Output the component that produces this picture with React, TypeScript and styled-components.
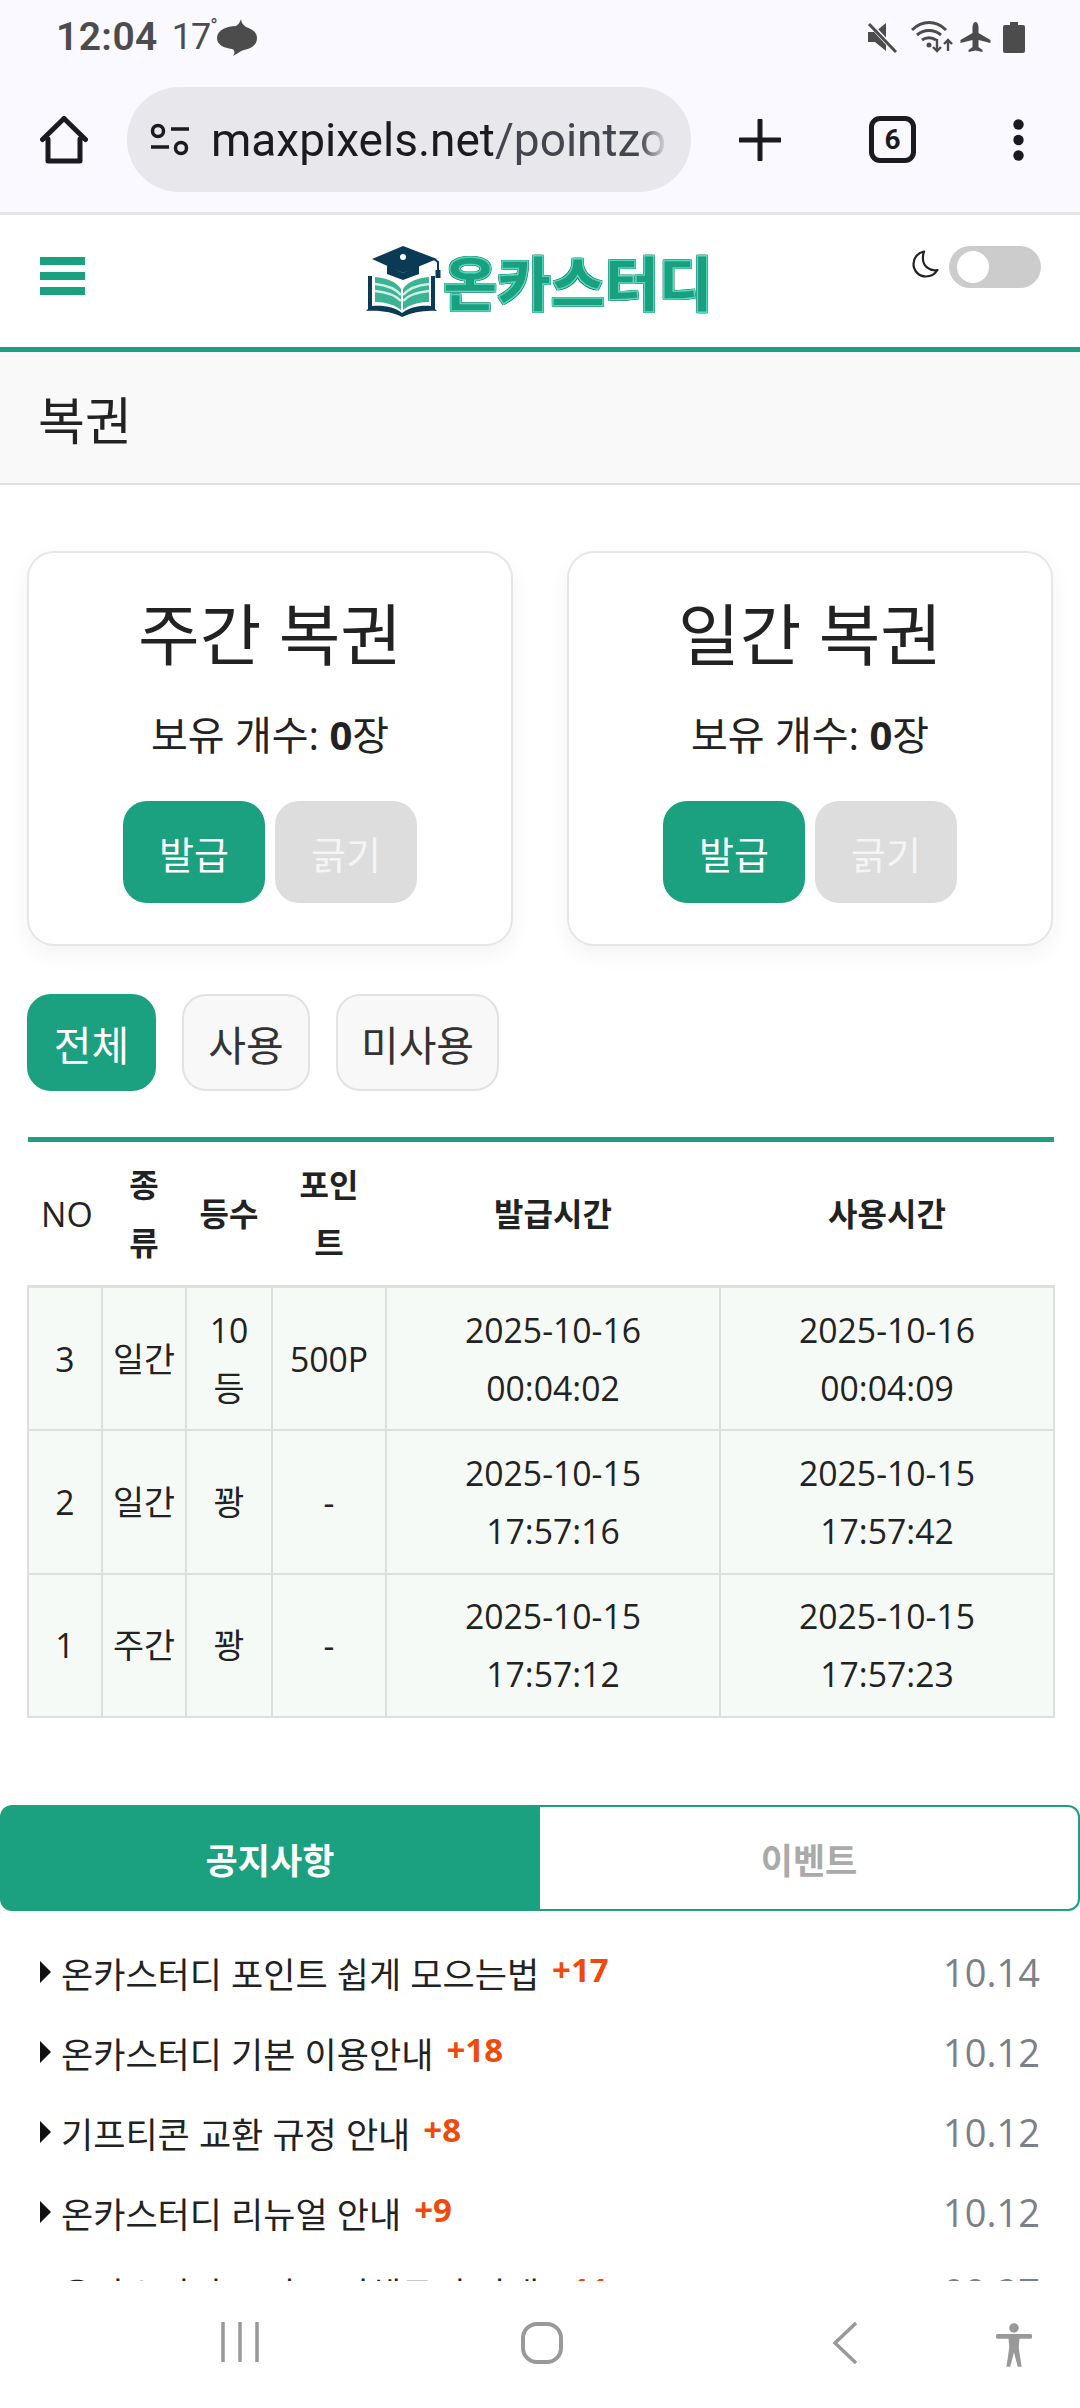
import React from "react";
import styled, { createGlobalStyle } from "styled-components";

const Global = createGlobalStyle`
  html, body { margin: 0; padding: 0; background: #fff; }
  body { width: 1080px; height: 2408px; overflow: hidden; font-family: "Open Sans", "Noto Sans CJK KR", sans-serif; color: #222; }
  * { box-sizing: border-box; }
`;

const Screen = styled.div`
  width: 1080px;
  height: 2408px;
  display: flex;
  flex-direction: column;
  overflow: hidden;
`;
const Chrome = styled.div`
  flex: none;
  height: 215px;
  background: #f9f9ff;
  border-bottom: 3px solid #e4e4e8;
  display: flex;
  flex-direction: column;
`;
const StatusBar = styled.div`
  height: 74px;
  padding: 0 55px 0 56px;
  display: flex;
  align-items: center;
  justify-content: space-between;
  color: #4c4c4c;
  font-family: Roboto, sans-serif;
`;
const StatusLeft = styled.div`
  display: flex;
  align-items: center;
`;
const Time = styled.span`
  font-size: 39px;
  font-weight: 600;
  letter-spacing: 0.4px;
`;
const Temp = styled.span`
  font-size: 36px;
  margin-left: 14px;
  letter-spacing: -1px;
`;
const Deg = styled.sup`
  font-size: 20px;
  line-height: 0;
  position: relative;
  top: -3px;
`;
const WeatherIcon = styled.svg`
  margin-left: 0;
`;
const StatusRight = styled.div`
  display: flex;
  align-items: center;
  gap: 7px;
`;
const WifiIcon = styled.svg`
  margin-left: 7px;
`;
const BatteryIcon = styled.svg`
  margin-left: 5px;
`;
const BrowserBar = styled.div`
  height: 118px;
  display: flex;
  align-items: flex-start;
  padding: 13px 0 0 40px;
`;
const Omnibox = styled.div`
  width: 564px;
  height: 105px;
  margin-left: 39px;
  border-radius: 52px;
  background: #e8e7ec;
  display: flex;
  align-items: center;
  padding-left: 23px;
  overflow: hidden;
`;
const Url = styled.div`
  margin-left: 21px;
  width: 457px;
  font-family: Roboto, sans-serif;
  font-size: 46px;
  white-space: nowrap;
  overflow: hidden;
  color: #1b1b1f;
  mask-image: linear-gradient(to right, #000 94%, transparent);
`;
const UrlPath = styled.span`
  color: #44464f;
`;
const IconSlot = styled.div<{ $ml: number }>`
  margin-left: ${(p) => p.$ml}px;
  height: 105px;
  display: flex;
  align-items: center;
`;
const TabCount = styled.div`
  width: 47px;
  height: 47px;
  border: 5px solid #1b1b1f;
  border-radius: 11px;
  display: flex;
  align-items: center;
  justify-content: center;
  font-family: Roboto, sans-serif;
  font-size: 28px;
  font-weight: 700;
  color: #1b1b1f;
`;
const SiteHeader = styled.header`
  flex: none;
  height: 137px;
  border-bottom: 5px solid #1ba17f;
  position: relative;
  display: flex;
  align-items: flex-start;
  padding-top: 42px;
  padding-left: 40px;
`;
const Burger = styled.div`
  width: 45px;
  display: flex;
  flex-direction: column;
  gap: 7px;
`;
const BurgerBar = styled.div`
  height: 8px;
  background: #1ba17f;
`;
const Logo = styled.div`
  margin-left: 281px;
  margin-top: -11px;
  display: flex;
  align-items: flex-start;
`;
const LogoText = styled.span`
  margin-left: -1px;
  margin-top: -1px;
  font-family: "Noto Sans CJK KR", sans-serif;
  font-size: 59px;
  font-weight: 900;
  line-height: 72px;
  letter-spacing: -0.4px;
  white-space: nowrap;
  color: #1ba07f;
  -webkit-text-stroke: 1.5px #4fdcc0;
  text-shadow: 1px 1px 0 #0e6a55, -1px -1px 0 #0e6a55, 1px -1px 0 #0e6a55, -1px 1px 0 #0e6a55;
`;
const ThemeBox = styled.div`
  position: absolute;
  top: 31px;
  left: 912px;
  display: flex;
  align-items: flex-start;
  gap: 10px;
`;
const MoonIcon = styled.svg`
  margin-top: 4px;
`;
const Toggle = styled.div`
  width: 92px;
  height: 42px;
  border-radius: 21px;
  background: #cccccc;
  padding: 5px 0 0 8px;
`;
const Knob = styled.div`
  width: 32px;
  height: 32px;
  border-radius: 50%;
  background: #fff;
`;
const PageTitle = styled.div`
  flex: none;
  height: 133px;
  background: #f9f9f9;
  border-bottom: 2px solid #dfdfe5;
  display: flex;
  align-items: center;
  padding-left: 38px;
  font-size: 51px;
  color: #222;
`;
const Content = styled.main`
  flex: 1;
  min-height: 0;
  overflow: hidden;
  padding: 66px 27px 0;
`;
const Cards = styled.div`
  display: flex;
  justify-content: space-between;
`;
const Card = styled.section`
  width: 486px;
  height: 395px;
  border: 2px solid #e6e6e6;
  border-radius: 27px;
  background: #fff;
  box-shadow: 0 8px 22px rgba(0, 0, 0, 0.05);
  display: flex;
  flex-direction: column;
  align-items: center;
`;
const CardTitle = styled.h2`
  margin: 37px 0 0;
  font-size: 67px;
  font-weight: 400;
  line-height: 88px;
  color: #222;
`;
const Owned = styled.p`
  margin: 29px 0 0;
  font-size: 40px;
  line-height: 56px;
  color: #222;
`;
const OwnedNum = styled.b`
  font-weight: 700;
`;
const CardButtons = styled.div`
  margin-top: 38px;
  display: flex;
  gap: 10px;
`;
const CardButton = styled.div<{ $on?: boolean }>`
  width: 142px;
  height: 102px;
  border-radius: 24px;
  background: ${(p) => (p.$on ? "#1ba17f" : "#dddddd")};
  color: ${(p) => (p.$on ? "#fff" : "#f5f5f5")};
  font-size: 38px;
  display: flex;
  align-items: center;
  justify-content: center;
`;
const Filters = styled.div`
  margin-top: 48px;
  display: flex;
  gap: 26px;
`;
const Filter = styled.div<{ $on?: boolean; $w: number }>`
  width: ${(p) => p.$w}px;
  height: 97px;
  border-radius: 24px;
  border: 2px solid ${(p) => (p.$on ? "#1ba17f" : "#e2e2e2")};
  background: ${(p) => (p.$on ? "#1ba17f" : "#f8f8f8")};
  color: ${(p) => (p.$on ? "#fff" : "#333")};
  font-size: 41px;
  display: flex;
  align-items: center;
  justify-content: center;
`;
const Ledger = styled.table`
  margin-top: 46px;
  width: 1026px;
  table-layout: fixed;
  border-collapse: collapse;
  border-top: 5px solid #1f9e80;
  font-size: 33.75px;
  line-height: 58px;
  text-align: center;
`;
const HeadCell = styled.th<{ $plain?: boolean }>`
  height: 147px;
  padding: 0 13px;
  font-size: ${(p) => (p.$plain ? 33.75 : 32)}px;
  font-weight: ${(p) => (p.$plain ? 400 : 700)};
  color: #222;
  border-bottom: 3px solid #dfdfdf;
`;
const Cell = styled.td`
  height: 143.5px;
  padding: 0 9px;
  background: #f6faf7;
  border: 2px solid #dedede;
  color: #222;
`;
const DateCell = styled(Cell)`
  padding: 0 70px;
`;
const Tabs = styled.div`
  margin: 87px -27px 0;
  height: 106px;
  display: flex;
`;
const TabOn = styled.div`
  width: 540px;
  background: #1ba17f;
  border-radius: 12px 0 0 12px;
  color: #fff;
  font-size: 35px;
  font-weight: 700;
  display: flex;
  align-items: center;
  justify-content: center;
`;
const TabOff = styled.div`
  width: 540px;
  background: #fff;
  border: 2px solid #1f9e80;
  border-left: 0;
  border-radius: 0 12px 12px 0;
  color: #aaaaaa;
  font-size: 35px;
  font-weight: 700;
  display: flex;
  align-items: center;
  justify-content: center;
`;
const List = styled.ul`
  list-style: none;
  margin: 21px -27px 0;
  padding: 0 40px;
`;
const Row = styled.li`
  height: 80px;
  display: flex;
  align-items: center;
`;
const Arrow = styled.i`
  flex: none;
  width: 0;
  height: 0;
  border-left: 11px solid #111;
  border-top: 11px solid transparent;
  border-bottom: 11px solid transparent;
  margin-right: 10px;
`;
const RowTitle = styled.span`
  font-size: 35px;
  color: #222;
  white-space: nowrap;
`;
const Count = styled.b`
  margin-left: 13px;
  font-size: 33px;
  font-weight: 700;
  color: #f04a0a;
  position: relative;
  top: -3px;
`;
const RowDate = styled.span`
  margin-left: auto;
  font-size: 38px;
  color: #7b8088;
`;
const NavBar = styled.nav`
  flex: none;
  height: 127px;
  background: #fff;
  display: flex;
  align-items: flex-start;
  padding-top: 41px;
`;
const NavSlot = styled.div<{ $ml: number }>`
  margin-left: ${(p) => p.$ml}px;
  display: flex;
`;

const rows = [
  ["3", "일간", "10등", "500P", "2025-10-16 00:04:02", "2025-10-16 00:04:09"],
  ["2", "일간", "꽝", "-", "2025-10-15 17:57:16", "2025-10-15 17:57:42"],
  ["1", "주간", "꽝", "-", "2025-10-15 17:57:12", "2025-10-15 17:57:23"],
];
const notices = [
  ["온카스터디 포인트 쉽게 모으는법", "+17", "10.14"],
  ["온카스터디 기본 이용안내", "+18", "10.12"],
  ["기프티콘 교환 규정 안내", "+8", "10.12"],
  ["온카스터디 리뉴얼 안내", "+9", "10.12"],
  ["온카스터디 포인트 전체규정 안내", "+11", "09.27"],
];

const CardBlock = ({ title }: { title: string }) => (
  <Card>
    <CardTitle>{title}</CardTitle>
    <Owned>
      보유 개수: <OwnedNum>0</OwnedNum>장
    </Owned>
    <CardButtons>
      <CardButton $on>발급</CardButton>
      <CardButton>긁기</CardButton>
    </CardButtons>
  </Card>
);

const LogoMark = () => (
  <svg width="78" height="72" viewBox="0 0 78 72">
    <path d="M2 30h4v30c12-1 23 1 30 7 8-6 18-8 29-7V30h4v33l2 2c-12-1-24 1-35 6-9-5-22-7-36-6l2-2z" fill="#0b3a55" />
    <path d="M9 31c11 1 21 4 26 12v21c-6-5-15-8-26-8z" fill="#3bb394" />
    <path d="M63 31c-11 1-21 4-26 12v21c6-5 15-8 26-8z" fill="#3bb394" />
    <path d="M9 38c10 1 20 4 26 11M9 45c10 1 20 3 26 10M63 38c-10 1-20 4-26 11M63 45c-10 1-20 3-26 10" stroke="#d5efe6" strokeWidth="2.500" fill="none" />
    <path d="M37 0 71 13 37 27 6 13z" fill="#0b3a55" />
    <path d="M21 19v9l16 6 16-6v-9l-16 8z" fill="#0b3a55" />
    <path d="M68 13l4 3v11" stroke="#0b3a55" strokeWidth="2" fill="none" />
    <rect x="69.500" y="24" width="5" height="8" fill="#0b3a55" />
    <circle cx="37" cy="11" r="3" fill="#fff" />
  </svg>
);

export default function App() {
  return (
    <Screen>
      <Global />
      <Chrome>
        <StatusBar>
          <StatusLeft>
            <Time>12:04</Time>
            <Temp>
              17<Deg>°</Deg>
            </Temp>
            <WeatherIcon width="40" height="37" viewBox="0 0 40 37">
              <path d="M24 0C23 3 22 5 19 7C10 7 0 11 0 19C0 26 7 29 15 30C18 31 18 34 16 37C20 35 23 32 27 31C34 30 40 26 40 19C40 13 35 10 29 8C26 6 24 3 24 0Z" fill="#4c4c4c" />
            </WeatherIcon>
          </StatusLeft>
          <StatusRight>
            <svg width="30" height="31" viewBox="0 0 30 31">
              <path d="M1 10h7l11-9v28l-11-9H1z" fill="#4c4c4c" />
              <path d="M3 2l26 28" stroke="#f9f9ff" strokeWidth="5" />
              <path d="M2 2l27 28" stroke="#4c4c4c" strokeWidth="3" />
            </svg>
            <WifiIcon width="42" height="32" viewBox="0 0 42 32">
              <path d="M1 9c10-10 24-10 34 0M6 14c7-6 17-6 24 0M11 19c4-3 10-3 14 0" stroke="#4c4c4c" strokeWidth="3" fill="none" />
              <circle cx="18" cy="24" r="2.500" fill="#4c4c4c" />
              <path d="M26 18v12M22 26l4 4 4-4M37 30V19M33 23l4-4 4 4" stroke="#4c4c4c" strokeWidth="2.400" fill="none" />
            </WifiIcon>
            <svg width="31" height="31" viewBox="0 0 31 31">
              <path d="M15.500 0c2 0 3 3 3 6v5l12 7v3l-12-3v7l4 3v2l-7-1.500-7 1.500v-2l4-3v-7L.5 21v-3l12-7V6c0-3 1-6 3-6z" fill="#4c4c4c" />
            </svg>
            <BatteryIcon width="22" height="31" viewBox="0 0 22 31">
              <path d="M7 0h8v3h5a2 2 0 0 1 2 2v24a2 2 0 0 1-2 2H2a2 2 0 0 1-2-2V5a2 2 0 0 1 2-2h5z" fill="#4c4c4c" />
            </BatteryIcon>
          </StatusRight>
        </StatusBar>
        <BrowserBar>
          <IconSlot $ml={0}>
            <svg width="48" height="48" viewBox="0 0 48 48">
              <path d="M2.500 23.500 24 2.500l21.500 21M8 23v22h32V23" fill="none" stroke="#1b1b1f" strokeWidth="5" strokeLinejoin="round" strokeLinecap="round" />
            </svg>
          </IconSlot>
          <Omnibox>
            <svg width="40" height="34" viewBox="0 0 40 34">
              <circle cx="8" cy="8" r="5.500" fill="none" stroke="#1b1b1f" strokeWidth="3.500" />
              <circle cx="31" cy="25" r="5.500" fill="none" stroke="#1b1b1f" strokeWidth="3.500" />
              <path d="M21 6h18M1 24h18" stroke="#1b1b1f" strokeWidth="3.500" />
            </svg>
            <Url>
              maxpixels.net<UrlPath>/pointzone</UrlPath>
            </Url>
          </Omnibox>
          <IconSlot $ml={48}>
            <svg width="42" height="42" viewBox="0 0 42 42">
              <path d="M21 1.500v39M1.500 21h39" stroke="#1b1b1f" strokeWidth="5" strokeLinecap="round" />
            </svg>
          </IconSlot>
          <IconSlot $ml={88}>
            <TabCount>6</TabCount>
          </IconSlot>
          <IconSlot $ml={97}>
            <svg width="11" height="42" viewBox="0 0 11 42">
              <circle cx="5.500" cy="5.500" r="5.200" fill="#1b1b1f" />
              <circle cx="5.500" cy="21" r="5.200" fill="#1b1b1f" />
              <circle cx="5.500" cy="36.500" r="5.200" fill="#1b1b1f" />
            </svg>
          </IconSlot>
        </BrowserBar>
      </Chrome>
      <SiteHeader>
        <Burger>
          <BurgerBar />
          <BurgerBar />
          <BurgerBar />
        </Burger>
        <Logo>
          <LogoMark />
          <LogoText>온카스터디</LogoText>
        </Logo>
        <ThemeBox>
          <MoonIcon width="27" height="28" viewBox="0 0 27 28">
            <path d="M12 1.500C5.500 3 1.500 8 1.500 14c0 7 5.500 12.500 12.500 12.500 5 0 9-2.500 11.500-6.500-7.500 1.500-14-3.500-14.500-10.500C10.800 6.500 11 4 12 1.500z" fill="none" stroke="#222" strokeWidth="2.200" strokeLinejoin="round" />
          </MoonIcon>
          <Toggle>
            <Knob />
          </Toggle>
        </ThemeBox>
      </SiteHeader>
      <PageTitle>복권</PageTitle>
      <Content>
        <Cards>
          <CardBlock title="주간 복권" />
          <CardBlock title="일간 복권" />
        </Cards>
        <Filters>
          <Filter $on $w={129}>전체</Filter>
          <Filter $w={128}>사용</Filter>
          <Filter $w={163}>미사용</Filter>
        </Filters>
        <Ledger>
          <colgroup>
            <col style={{ width: 74 }} />
            <col style={{ width: 84 }} />
            <col style={{ width: 86 }} />
            <col style={{ width: 114 }} />
            <col style={{ width: 334 }} />
            <col style={{ width: 334 }} />
          </colgroup>
          <thead>
            <tr>
              <HeadCell $plain>NO</HeadCell>
              <HeadCell>종류</HeadCell>
              <HeadCell>등수</HeadCell>
              <HeadCell>포인트</HeadCell>
              <HeadCell>발급시간</HeadCell>
              <HeadCell>사용시간</HeadCell>
            </tr>
          </thead>
          <tbody>
            {rows.map((r) => (
              <tr key={r[0]}>
                {r.slice(0, 4).map((c, i) => (
                  <Cell key={i}>{c}</Cell>
                ))}
                <DateCell>{r[4]}</DateCell>
                <DateCell>{r[5]}</DateCell>
              </tr>
            ))}
          </tbody>
        </Ledger>
        <Tabs>
          <TabOn>공지사항</TabOn>
          <TabOff>이벤트</TabOff>
        </Tabs>
        <List>
          {notices.map((n) => (
            <Row key={n[0]}>
              <Arrow />
              <RowTitle>{n[0]}</RowTitle>
              <Count>{n[1]}</Count>
              <RowDate>{n[2]}</RowDate>
            </Row>
          ))}
        </List>
      </Content>
      <NavBar>
        <NavSlot $ml={221}>
          <svg width="38" height="40" viewBox="0 0 38 40">
            <path d="M2 0v40M19 0v40M36 0v40" stroke="#999" strokeWidth="3.500" />
          </svg>
        </NavSlot>
        <NavSlot $ml={262}>
          <svg width="42" height="42" viewBox="0 0 42 42">
            <rect x="2" y="2" width="38" height="38" rx="14" fill="none" stroke="#999" strokeWidth="4" />
          </svg>
        </NavSlot>
        <NavSlot $ml={269}>
          <svg width="26" height="42" viewBox="0 0 26 42">
            <path d="M24 1 3 21l21 20" fill="none" stroke="#999" strokeWidth="3.500" />
          </svg>
        </NavSlot>
        <NavSlot $ml={138}>
          <svg width="36" height="46" viewBox="0 0 38 46">
            <circle cx="19" cy="5" r="5" fill="#999" />
            <path d="M2 14h34" stroke="#999" strokeWidth="5" strokeLinecap="round" />
            <path d="M13 14h12l-1 12 3 20h-4l-4-15-4 15h-4l3-20z" fill="#999" />
          </svg>
        </NavSlot>
      </NavBar>
    </Screen>
  );
}
